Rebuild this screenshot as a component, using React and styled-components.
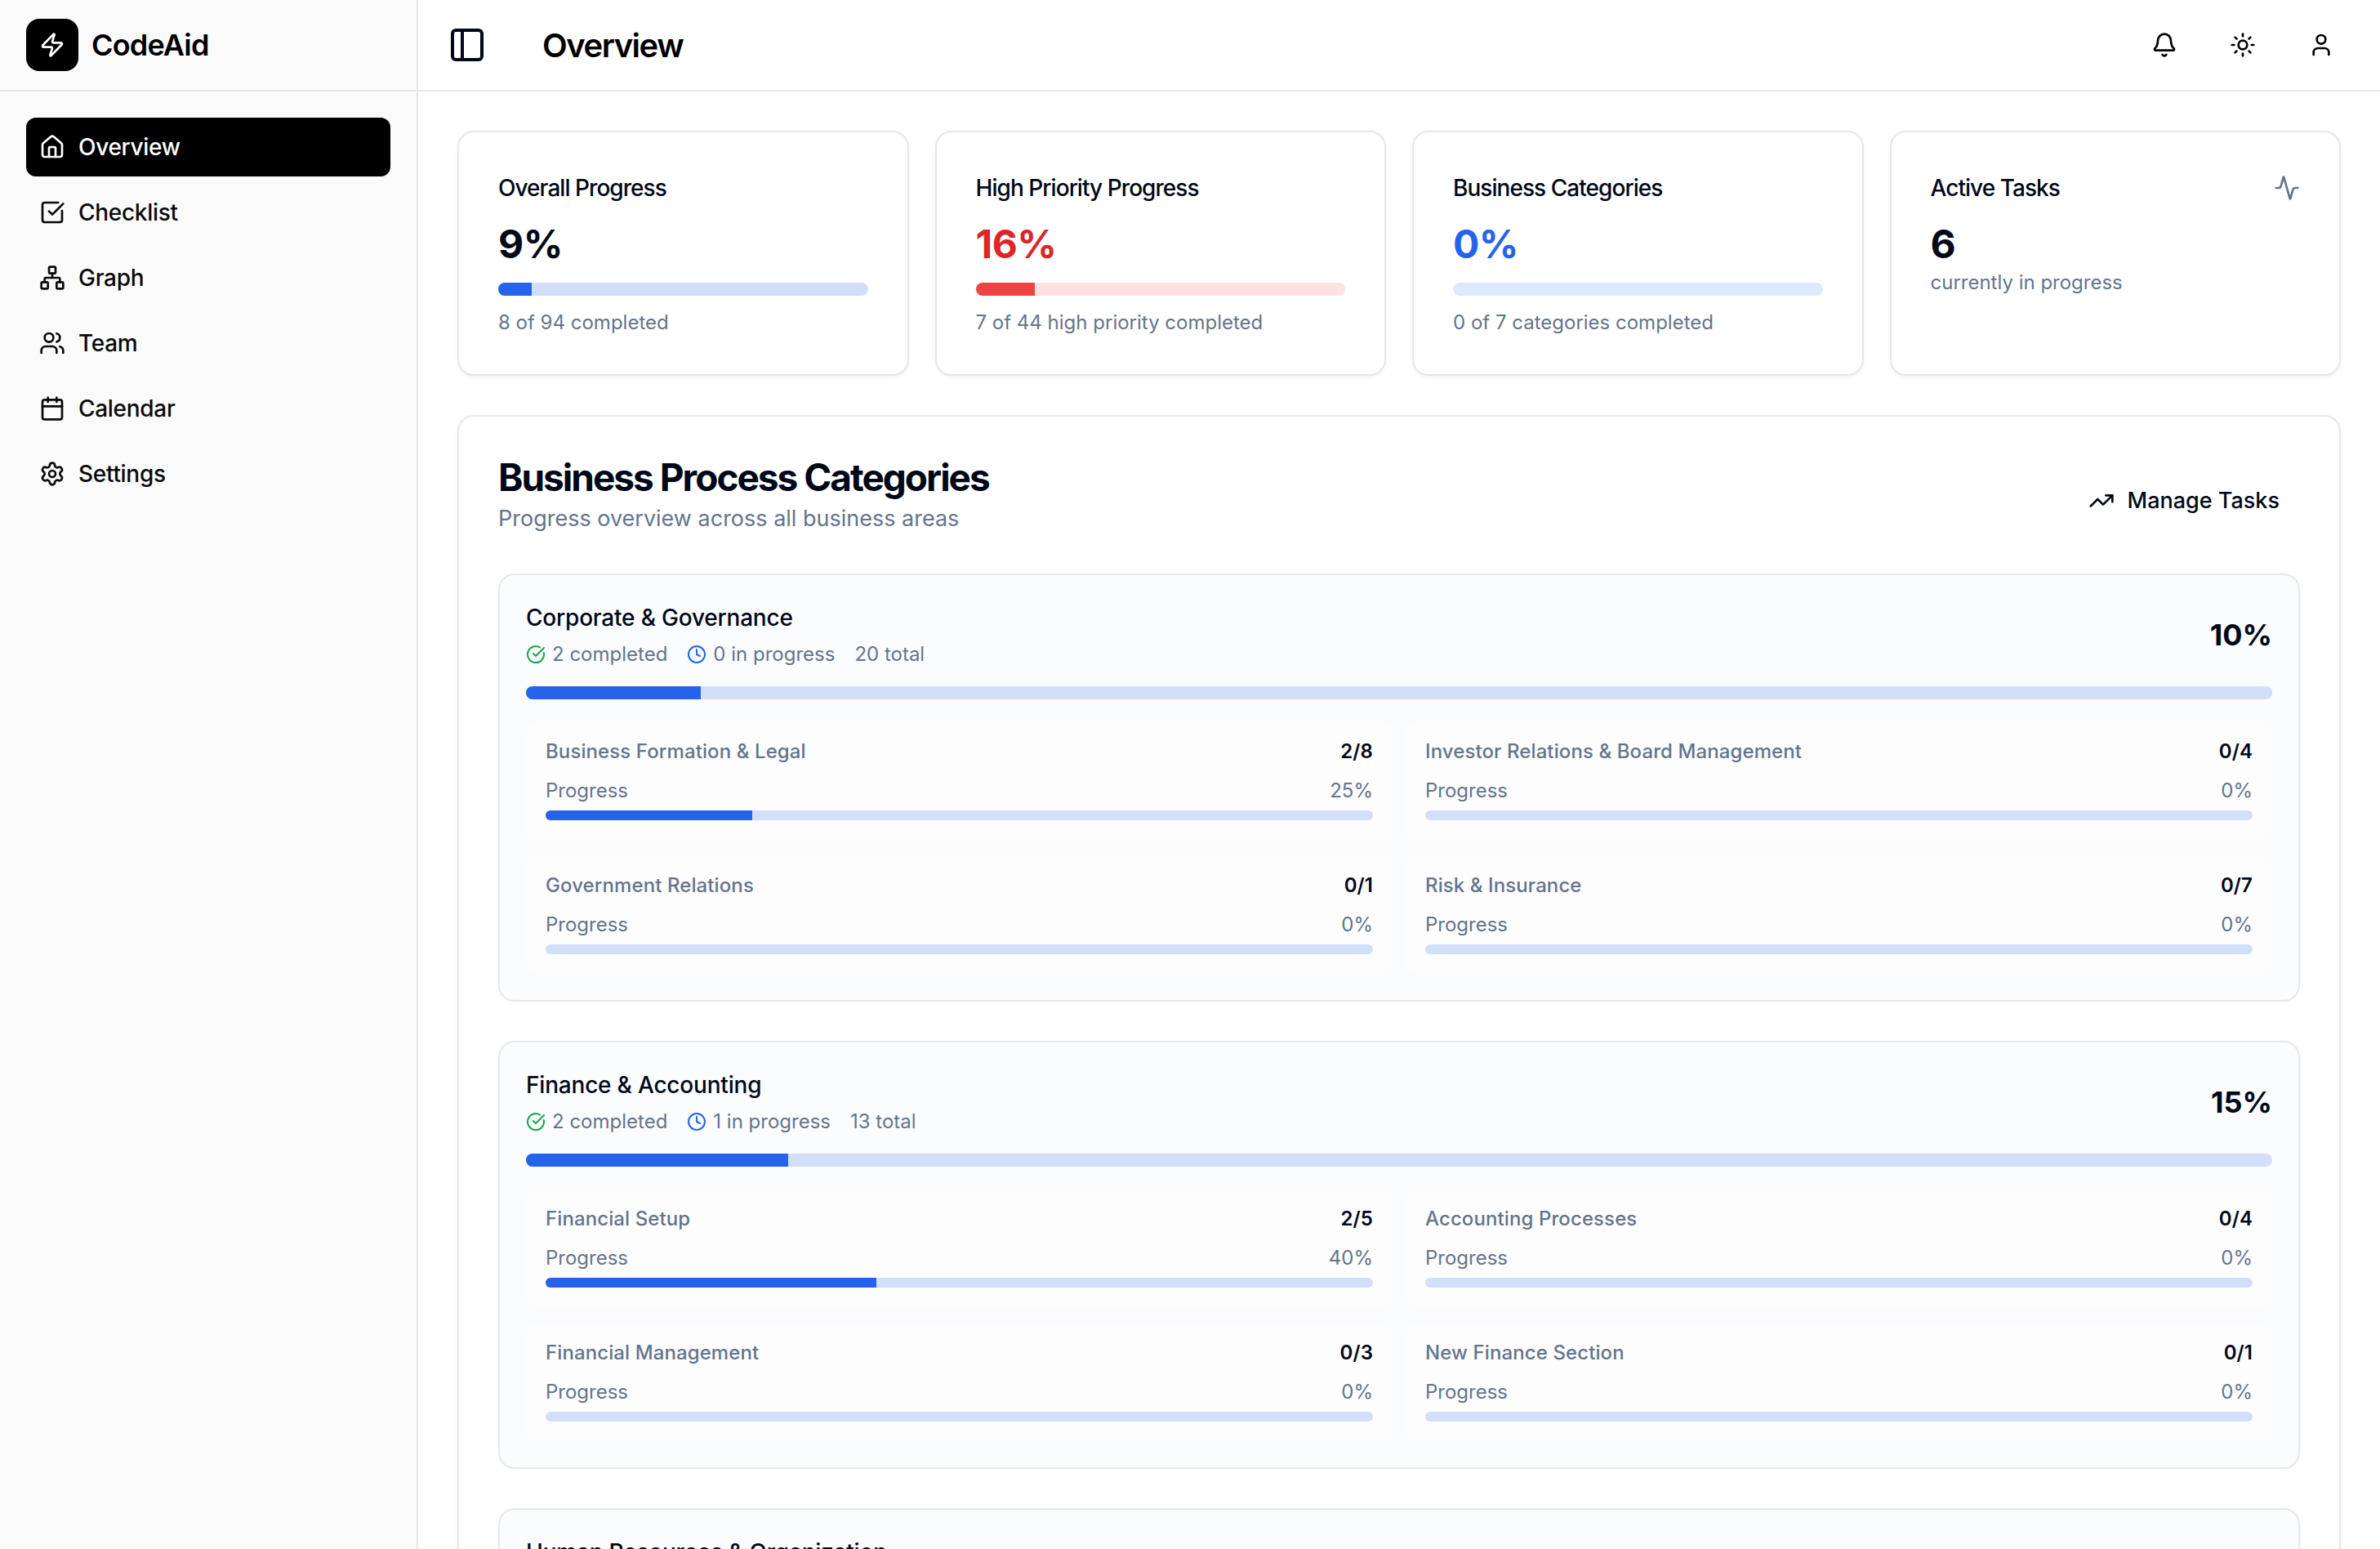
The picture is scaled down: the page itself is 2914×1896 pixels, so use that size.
import React from 'react'
import styled, { createGlobalStyle } from 'styled-components'
import {
  Activity, Bell, Calendar, CircleCheckBig, Clock, House, Network,
  PanelLeft, Settings, SquareCheckBig, Sun, TrendingUp, User, Users, Zap,
} from 'lucide-react'

const GlobalStyle = createGlobalStyle`
  * { box-sizing: border-box; }
  html, body { margin: 0; height: 100%; overflow: hidden; background: #fff; }
  body { font-family: Inter, "Liberation Sans", sans-serif; color: #020817; }
`

const Shell = styled.div`
  display: flex;
  height: 1896px;
  overflow: hidden;
`

const Sidebar = styled.aside`
  width: 512px;
  flex-shrink: 0;
  background: #fafafa;
  border-right: 2px solid #e5e7eb;
`

const Brand = styled.div`
  height: 112px;
  display: flex;
  align-items: center;
  gap: 16px;
  padding: 0 32px;
  border-bottom: 2px solid #e5e7eb;
`

const LogoMark = styled.div`
  width: 64px;
  height: 64px;
  border-radius: 16px;
  background: #000;
  color: #fff;
  display: flex;
  align-items: center;
  justify-content: center;
`

const BrandName = styled.span`
  font-size: 36px;
  font-weight: 600;
  letter-spacing: -0.8px;
  color: #000;
`

const Nav = styled.nav`
  display: flex;
  flex-direction: column;
  gap: 8px;
  padding: 32px 32px;
`

const NavItem = styled.a`
  height: 72px;
  display: flex;
  align-items: center;
  gap: 16px;
  padding: 0 16px;
  border-radius: 12px;
  font-size: 28px;
  font-weight: 500;
  letter-spacing: -0.3px;
  color: ${(p) => (p.$active ? '#fff' : '#0a0a0a')};
  background: ${(p) => (p.$active ? '#000' : 'transparent')};
`

const Main = styled.main`
  flex: 1;
  min-width: 0;
  display: flex;
  flex-direction: column;
`

const Header = styled.header`
  height: 112px;
  flex-shrink: 0;
  display: flex;
  align-items: center;
  padding: 0 32px 0 36px;
  border-bottom: 2px solid #e5e7eb;
`

const PageTitle = styled.h1`
  margin: 0 0 0 68px;
  font-size: 40px;
  font-weight: 600;
  letter-spacing: -1.5px;
  color: #000;
`

const HeaderActions = styled.div`
  margin-left: auto;
  display: flex;
  gap: 16px;
`

const IconButton = styled.div`
  width: 80px;
  height: 80px;
  display: flex;
  align-items: center;
  justify-content: center;
  color: #000;
`

const Content = styled.div`
  padding: 48px;
  display: flex;
  flex-direction: column;
  gap: 48px;
`

const StatGrid = styled.div`
  display: grid;
  grid-template-columns: repeat(4, 1fr);
  gap: 32px;
`

const Card = styled.div`
  height: 300px;
  padding: 48px;
  background: #fff;
  border: 2px solid #e5e7eb;
  border-radius: 20px;
  box-shadow: 0 2px 4px rgba(0, 0, 0, 0.05);
`

const CardHead = styled.div`
  display: flex;
  align-items: center;
  justify-content: space-between;
  height: 40px;
  font-size: 28px;
  font-weight: 500;
  letter-spacing: -0.95px;
  color: #020817;
  svg { color: #64748b; }
`

const StatValue = styled.div`
  margin-top: 21px;
  font-size: 48px;
  line-height: 56px;
  font-weight: 700;
  letter-spacing: -0.5px;
  color: ${(p) => p.$color || '#020817'};
`

const StatNote = styled.div`
  margin-top: ${(p) => p.$top || 17}px;
  font-size: 24px;
  line-height: 32px;
  color: #64748b;
`

const Track = styled.div`
  height: ${(p) => p.$h}px;
  margin-top: ${(p) => p.$top || 0}px;
  border-radius: 999px;
  background: ${(p) => p.$bg || '#d2dffa'};
  overflow: hidden;
`

const Fill = styled.div`
  height: 100%;
  background: ${(p) => p.$color || '#2563eb'};
`

const Panel = styled.section`
  padding: 48px;
  background: #fff;
  border: 2px solid #e5e7eb;
  border-radius: 20px;
  box-shadow: 0 2px 4px rgba(0, 0, 0, 0.05);
`

const PanelHead = styled.div`
  display: flex;
  justify-content: space-between;
  align-items: center;
  padding-top: 2px;
  margin-bottom: 49px;
`

const PanelTitle = styled.h2`
  margin: 0;
  font-size: 46px;
  line-height: 48px;
  font-weight: 700;
  letter-spacing: -2px;
  color: #020817;
`

const PanelSub = styled.p`
  margin: 9px 0 0;
  font-size: 27px;
  line-height: 36px;
  color: #64748b;
`

const ManageButton = styled.div`
  display: flex;
  align-items: center;
  gap: 16px;
  margin-top: 12px;
  padding: 0 25px;
  font-size: 27px;
  font-weight: 500;
  color: #020817;
`

const CategoryList = styled.div`
  display: flex;
  flex-direction: column;
  gap: 48px;
`

const Category = styled.div`
  padding: 32px;
  background: #fbfcfe;
  border: 2px solid #e5e7eb;
  border-radius: 20px;
`

const CategoryHead = styled.div`
  display: flex;
  justify-content: space-between;
  align-items: center;
`

const CategoryName = styled.div`
  font-size: 28px;
  line-height: 40px;
  font-weight: 500;
  letter-spacing: -0.2px;
  color: #020817;
`

const Stats = styled.div`
  display: flex;
  gap: 24px;
  margin-top: 9px;
  font-size: 24px;
  line-height: 32px;
  color: #64748b;
`

const StatItem = styled.span`
  display: flex;
  align-items: center;
  gap: 8px;
  svg { color: ${(p) => p.$color}; }
`

const Percent = styled.div`
  font-size: 36px;
  font-weight: 700;
  color: #020817;
`

const AreaGrid = styled.div`
  display: grid;
  grid-template-columns: 1fr 1fr;
  gap: 20px 16px;
  margin-top: 28px;
`

const Area = styled.div`
  padding: 20px 24px 24px;
  background: #fdfdfe;
  border-radius: 12px;
`

const AreaRow = styled.div`
  display: flex;
  justify-content: space-between;
  font-size: 24px;
  line-height: 32px;
  color: #64748b;
`

const AreaName = styled(AreaRow)`
  font-weight: 500;
  letter-spacing: 0.1px;
  margin-bottom: 16px;
`

const AreaCount = styled.span`
  font-weight: 600;
  color: #020817;
`

const categories = [
  {
    name: 'Corporate & Governance', done: 2, active: 0, total: 20, pct: 10,
    areas: [
      ['Business Formation & Legal', '2/8', 25],
      ['Investor Relations & Board Management', '0/4', 0],
      ['Government Relations', '0/1', 0],
      ['Risk & Insurance', '0/7', 0],
    ],
  },
  {
    name: 'Finance & Accounting', done: 2, active: 1, total: 13, pct: 15,
    areas: [
      ['Financial Setup', '2/5', 40],
      ['Accounting Processes', '0/4', 0],
      ['Financial Management', '0/3', 0],
      ['New Finance Section', '0/1', 0],
    ],
  },
  {
    name: 'Human Resources & Organization', done: 0, active: 0, total: 12, pct: 0,
    areas: [],
  },
]

const navItems = [
  [House, 'Overview'],
  [SquareCheckBig, 'Checklist'],
  [Network, 'Graph'],
  [Users, 'Team'],
  [Calendar, 'Calendar'],
  [Settings, 'Settings'],
]

const App = () => {
  return (
    <Shell>
      <GlobalStyle />
      <Sidebar>
        <Brand>
          <LogoMark><Zap size={32} /></LogoMark>
          <BrandName>CodeAid</BrandName>
        </Brand>
        <Nav>
          {navItems.map(([Icon, label], i) => (
            <NavItem key={label} $active={i === 0}>
              <Icon size={32} />
              {label}
            </NavItem>
          ))}
        </Nav>
      </Sidebar>
      <Main>
        <Header>
          <PanelLeft size={48} strokeWidth={2} />
          <PageTitle>Overview</PageTitle>
          <HeaderActions>
            <IconButton><Bell size={32} /></IconButton>
            <IconButton><Sun size={32} /></IconButton>
            <IconButton><User size={32} /></IconButton>
          </HeaderActions>
        </Header>
        <Content>
          <StatGrid>
            <Card>
              <CardHead>Overall Progress</CardHead>
              <StatValue>9%</StatValue>
              <Track $h={16} $top={19}><Fill style={{ width: '9%' }} /></Track>
              <StatNote>8 of 94 completed</StatNote>
            </Card>
            <Card>
              <CardHead>High Priority Progress</CardHead>
              <StatValue $color="#dc2626">16%</StatValue>
              <Track $h={16} $top={19} $bg="#fee2e2"><Fill $color="#ef4444" style={{ width: '16%' }} /></Track>
              <StatNote>7 of 44 high priority completed</StatNote>
            </Card>
            <Card>
              <CardHead>Business Categories</CardHead>
              <StatValue $color="#2563eb">0%</StatValue>
              <Track $h={16} $top={19} $bg="#dbeafe"><Fill style={{ width: '0%' }} /></Track>
              <StatNote>0 of 7 categories completed</StatNote>
            </Card>
            <Card>
              <CardHead>Active Tasks<Activity size={32} /></CardHead>
              <StatValue>6</StatValue>
              <StatNote $top={3}>currently in progress</StatNote>
            </Card>
          </StatGrid>
          <Panel>
            <PanelHead>
              <div>
                <PanelTitle>Business Process Categories</PanelTitle>
                <PanelSub>Progress overview across all business areas</PanelSub>
              </div>
              <ManageButton><TrendingUp size={32} />Manage Tasks</ManageButton>
            </PanelHead>
            <CategoryList>
              {categories.map((c) => (
                <Category key={c.name}>
                  <CategoryHead>
                    <div>
                      <CategoryName>{c.name}</CategoryName>
                      <Stats>
                        <StatItem $color="#16a34a"><CircleCheckBig size={24} />{c.done} completed</StatItem>
                        <StatItem $color="#2563eb"><Clock size={24} />{c.active} in progress</StatItem>
                        <StatItem>{c.total} total</StatItem>
                      </Stats>
                    </div>
                    <Percent>{c.pct}%</Percent>
                  </CategoryHead>
                  <Track $h={16} $top={23}><Fill style={{ width: `${c.pct}%` }} /></Track>
                  <AreaGrid>
                    {c.areas.map(([name, count, pct]) => (
                      <Area key={name}>
                        <AreaName>{name}<AreaCount>{count}</AreaCount></AreaName>
                        <AreaRow><span>Progress</span><span>{pct}%</span></AreaRow>
                        <Track $h={12} $top={8}><Fill style={{ width: `${pct}%` }} /></Track>
                      </Area>
                    ))}
                  </AreaGrid>
                </Category>
              ))}
            </CategoryList>
          </Panel>
        </Content>
      </Main>
    </Shell>
  )
}

export default App
